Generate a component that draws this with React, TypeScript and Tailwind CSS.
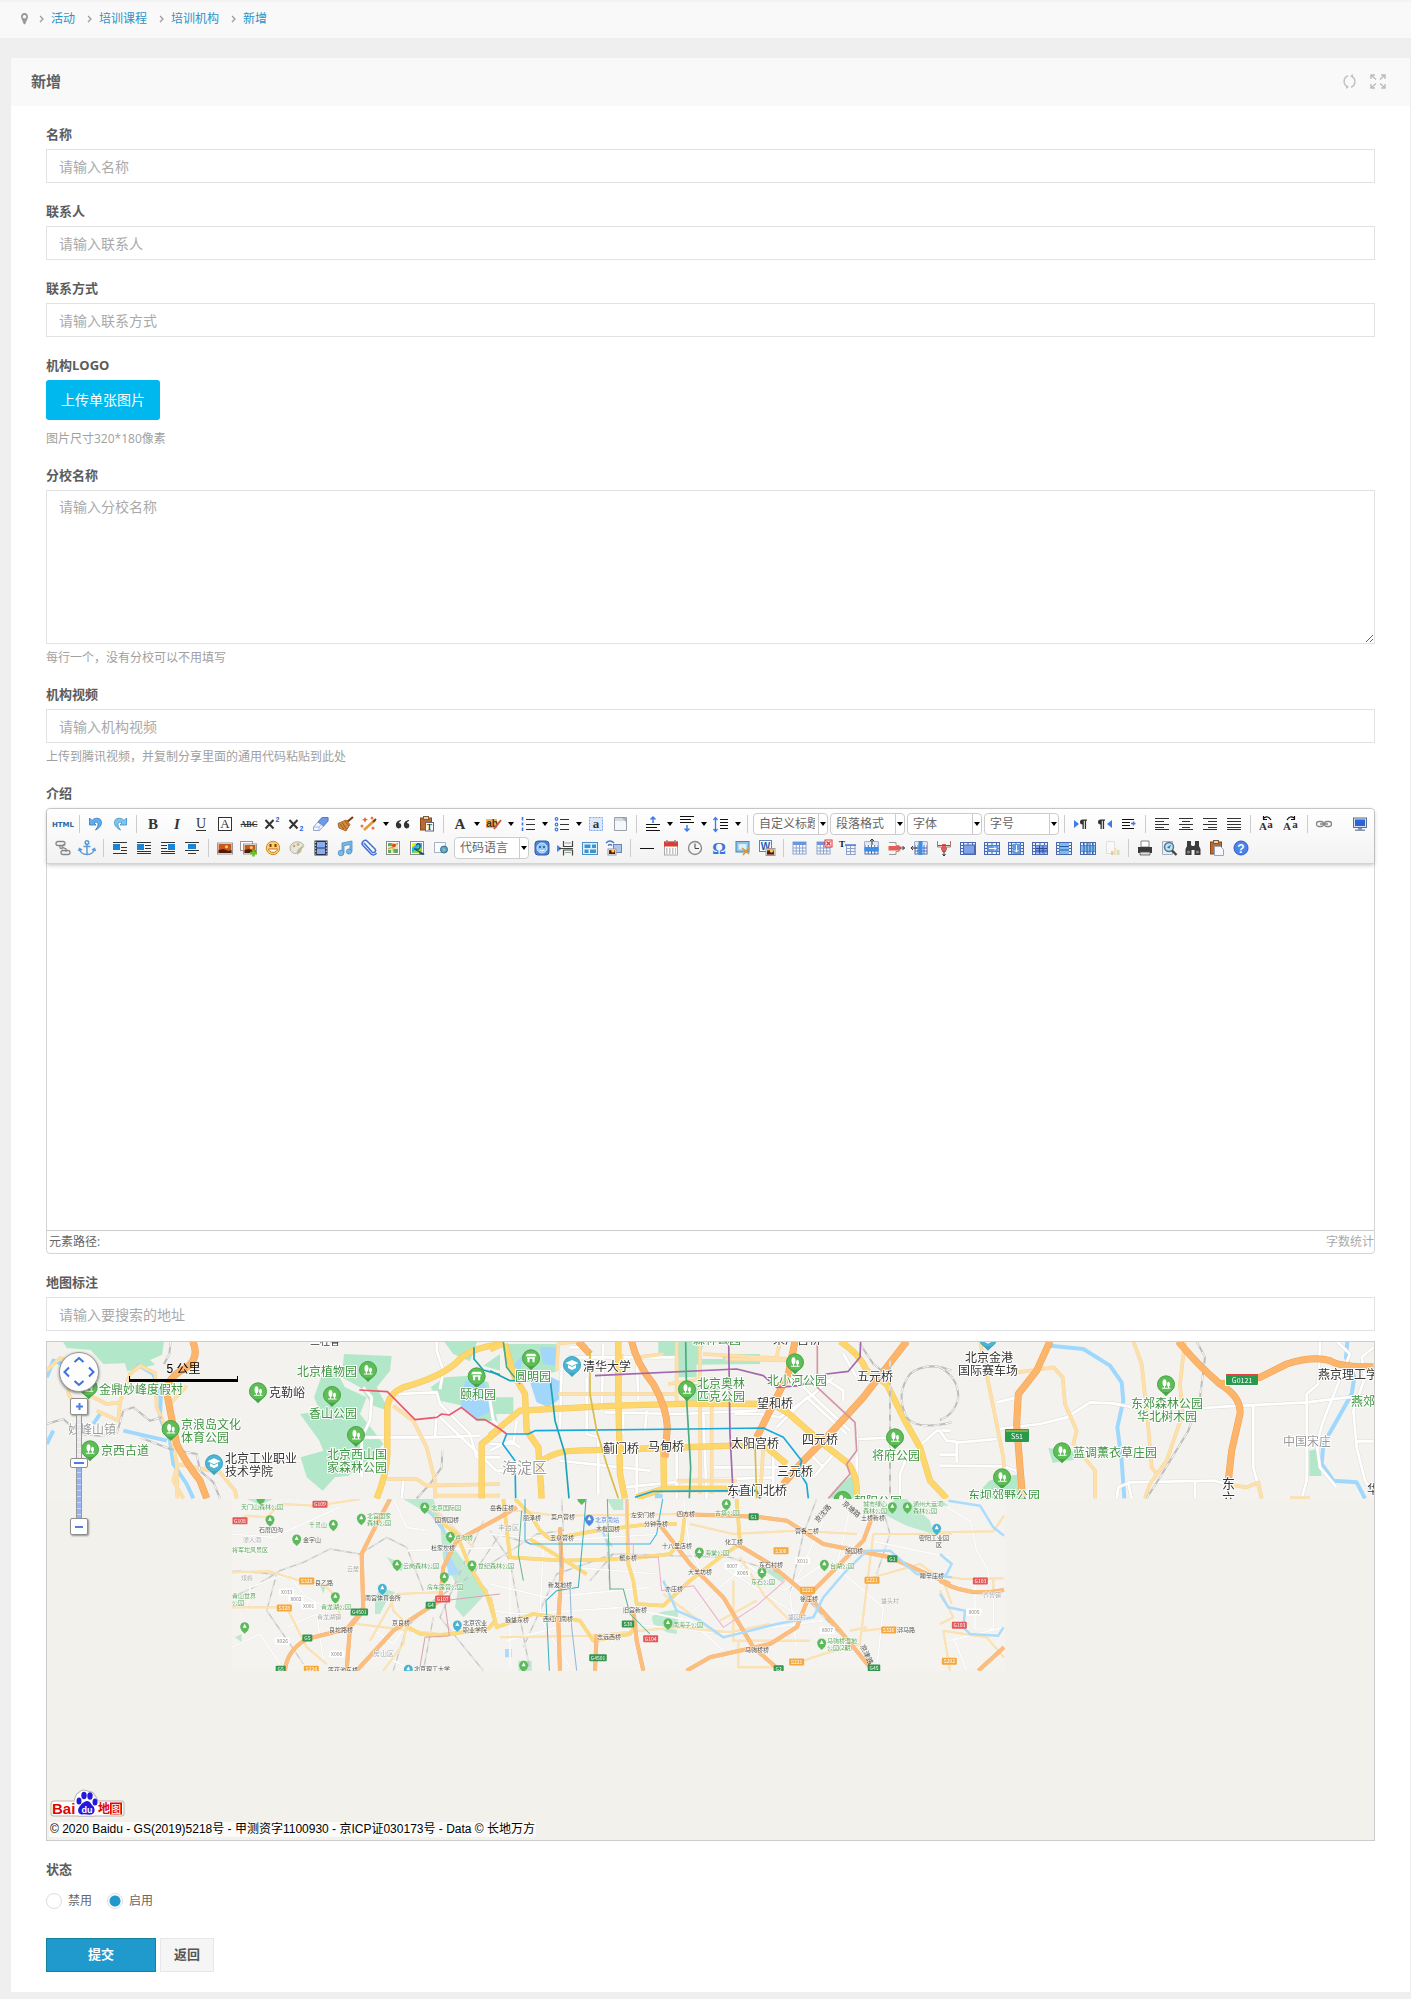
import React from "react";

const FONT = "font-['Open_Sans','Noto_Sans_CJK_SC',sans-serif]";

/* ---------- toolbar icons (20 x 20 grid) ---------- */

const INK = "#333";

function Lines({ rows, color = INK }: { rows: number[][]; color?: string }) {
  return (
    <g stroke={color} strokeWidth="1">
      {rows.map(([y, a, b], i) => (
        <path key={i} d={`M${a} ${y + 0.5}H${b}`} />
      ))}
    </g>
  );
}

function Glyph({ t, x = 10, y = 15, s = 14, w = 700, c = INK, f = "Liberation Serif", i = false }: { t: string; x?: number; y?: number; s?: number; w?: number; c?: string; f?: string; i?: boolean }) {
  return (
    <text x={x} y={y} fontSize={s} fontWeight={w} fill={c} fontFamily={f} textAnchor="middle" fontStyle={i ? "italic" : "normal"}>
      {t}
    </text>
  );
}

function Grid({ x = 3, y = 4, w = 13, h = 12, head = "#6b95e0", fill = "#fff", line = "#8aa2cc" }: { x?: number; y?: number; w?: number; h?: number; head?: string; fill?: string; line?: string }) {
  return (
    <g>
      <rect x={x} y={y} width={w} height={h} fill={fill} stroke={line} />
      <rect x={x} y={y} width={w} height="3" fill={head} />
      <path d={`M${x} ${y + 6}h${w}M${x} ${y + 9}h${w}M${x + w / 4} ${y + 3}v${h - 3}M${x + w / 2} ${y + 3}v${h - 3}M${x + (w * 3) / 4} ${y + 3}v${h - 3}`} stroke={line} strokeWidth="1" />
    </g>
  );
}

function MergeGrid({ children }: { children?: React.ReactNode }) {
  return (
    <g>
      <rect x="2.5" y="4.5" width="15" height="12" fill="#e8f0fb" stroke="#4a68ab" />
      <path d="M2.5 7.5h15M2.5 10.5h15M2.5 13.5h15M5.5 4.5v12M14.5 4.5v12M10 4.5v12" stroke="#4a68ab" />
      {children}
    </g>
  );
}

function Pic({ x, y, w, h }: { x: number; y: number; w: number; h: number }) {
  return (
    <g>
      <rect x={x} y={y} width={w} height={h} fill="#fff" stroke="#999" />
      <rect x={x + 1} y={y + 1} width={w - 2} height={h - 2} fill="#c9581c" />
      <path d={`M${x + 1} ${y + h - 1}v-3l${w / 3} -1 ${w / 3} 2 ${w / 3 - 2} -1v3z`} fill="#4c1c0c" />
      <circle cx={x + w * 0.6} cy={y + h * 0.35} r="1.5" fill="#ffd14f" />
    </g>
  );
}

const ARROW_BLUE = "#3f7be8";

const ICONS: Record<string, React.ReactNode> = {
  "源代码": <Glyph t="HTML" s={7} y={13} c="#2d6a9f" f="DejaVu Sans" />,
  "撤销": <path d="M3.500 4v7H10L8 9C10.500 7.500 12.500 8.500 12 11c-.3 2-1.500 3.500-2.500 5 3-1.500 6-4 6-7.500C15.500 3.500 9 3 6 6.500z" fill="#63aee8" stroke="#2e79bf" strokeWidth=".8" />,
  "重做": <path d="M16.500 4v7H10l2-2C9.500 7.500 7.500 8.500 8 11c.3 2 1.500 3.500 2.500 5-3-1.500-6-4-6-7.500C4.500 3.500 11 3 14 6.500z" fill="#7fc4ea" stroke="#3c8fc4" strokeWidth=".8" />,
  "加粗": <Glyph t="B" s={15} />,
  "斜体": <Glyph t="I" s={15} i />,
  "下划线": (
    <g>
      <Glyph t="U" s={14} w={400} y={14} />
      <path d="M5 16.500h10" stroke={INK} />
    </g>
  ),
  "字符边框": (
    <g>
      <rect x="3.500" y="3.500" width="13" height="13" fill="#fff" stroke={INK} />
      <Glyph t="A" s={13} w={400} y={14} />
    </g>
  ),
  "删除线": (
    <g>
      <Glyph t="ABC" s={8} y={13} />
      <path d="M1.500 10.500h17" stroke={INK} />
    </g>
  ),
  "上标": (
    <g>
      <path d="M2.500 6l8 8.500M10.500 6l-8 8.500" stroke={INK} strokeWidth="2" />
      <Glyph t="2" x={14.5} y={8} s={7} c="#2a5be0" f="Liberation Sans" />
    </g>
  ),
  "下标": (
    <g>
      <path d="M2.500 6l8 8.500M10.500 6l-8 8.500" stroke={INK} strokeWidth="2" />
      <Glyph t="2" x={14.5} y={17} s={7} c="#2a5be0" f="Liberation Sans" />
    </g>
  ),
  "清除格式": (
    <g strokeWidth=".8">
      <path d="M2.500 13L11 3.500h6L17 7 8.500 16.500H2.500z" fill="#f2f5fd" stroke="#7c8fc4" />
      <path d="M11 3.500h6L17 7l-4.500 5L7 8z" fill="#6e98e8" stroke="#4d74c4" />
      <path d="M2.500 13H8v3.500M8 13l3.500-3.500" stroke="#9aa8cc" fill="none" />
    </g>
  ),
  "格式刷": (
    <g>
      <path d="M18 3l-6 5" stroke="#7b3f14" strokeWidth="2.200" />
      <path d="M3 9.500l8-3.500 4 4.500L11 17 4 14z" fill="#d68a3c" stroke="#96561c" strokeWidth=".8" />
      <path d="M5 10l4 5M7.500 9l4 6M10 7l4 5" stroke="#7a4010" strokeWidth=".7" />
    </g>
  ),
  "自动排版": (
    <g>
      <path d="M5 16L16 6" stroke="#dc9c3c" strokeWidth="2.500" />
      <path d="M14 8l3-3" stroke="#704010" strokeWidth="2" />
      <path d="M6 3l1 2 2 .5-2 1-1 2-1-2-2-.5 2-1zM13 2l.7 1.500 1.500.5-1.500.7-.7 1.500-.7-1.500-1.500-.7 1.500-.5zM3 10l.7 1.500 1.500.5-1.500.7-.7 1.500-.7-1.500L.8 12l1.500-.5zM14 12l.7 1.500 1.500.5-1.500.7-.7 1.500-.7-1.500-1.500-.7 1.500-.5z" fill="#ee5a28" />
    </g>
  ),
  "引用": <path d="M8 6C4 6.500 2.500 9 3 12a2.700 2.700 0 1 0 3-3c0-1 1-1.800 2-2zM16 6c-4 .5-5.500 3-5 6a2.700 2.700 0 1 0 3-3c0-1 1-1.800 2-2z" fill={INK} />,
  "纯文本粘贴": (
    <g>
      <rect x="3.500" y="4" width="11" height="12" fill="#b86a34" stroke="#8a4518" />
      <rect x="6.500" y="2.500" width="5" height="3" fill="#e7d2b4" stroke="#7a5a3a" />
      <rect x="8.500" y="8.500" width="8" height="8.500" fill="#fff" stroke="#667" />
      <Glyph t="T" x={12.5} y={16} s={8} />
    </g>
  ),
  "字体颜色": <Glyph t="A" s={15} />,
  "背景色": (
    <g>
      <rect x="2" y="5" width="11" height="9" fill="#f8b64c" />
      <Glyph t="ab" x={8} y={13} s={10} f="Liberation Sans" />
      <path d="M10 15l7-9" stroke="#cf5a3c" strokeWidth="2" />
    </g>
  ),
  "有序列表": (
    <g>
      <path d="M4.500 3v3.500M4.500 8.500v3M4.500 13.500v3.500" stroke={ARROW_BLUE} strokeWidth="1.600" />
      <Lines rows={[[5, 8, 17], [10, 8, 17], [15, 8, 17]]} />
    </g>
  ),
  "无序列表": (
    <g>
      <g fill="none" stroke={ARROW_BLUE} strokeWidth="1.200">
        <circle cx="4.500" cy="5" r="1.300" />
        <circle cx="4.500" cy="10.500" r="1.300" />
        <circle cx="4.500" cy="15.500" r="1.300" />
      </g>
      <Lines rows={[[5, 8, 17], [10, 8, 17], [15, 8, 17]]} />
    </g>
  ),
  "全选": (
    <g>
      <rect x="3.500" y="3.500" width="13" height="13" fill="#dce9fc" stroke="#7fa8ea" strokeDasharray="2 1" />
      <Glyph t="a" y={14} s={13} />
    </g>
  ),
  "清空文档": (
    <g>
      <path d="M4.500 3.500h12v13h-12z" fill="#f6f7f9" stroke="#9aa0aa" />
      <path d="M5 4h11v3H5z" fill="#d4d9e2" />
      <path d="M12 4l4 4V4z" fill="#aab2c0" />
    </g>
  ),
  "段前距": (
    <g>
      <path d="M10 9V3M7.500 5.500L10 3l2.500 2.500" stroke={ARROW_BLUE} strokeWidth="1.500" fill="none" />
      <Lines rows={[[10, 3, 17], [13, 3, 14], [16, 3, 17]]} color="#111" />
    </g>
  ),
  "段后距": (
    <g>
      <path d="M10 11v6M7.500 14.500L10 17l2.500-2.500" stroke={ARROW_BLUE} strokeWidth="1.500" fill="none" />
      <Lines rows={[[2, 3, 17], [5, 3, 14], [8, 3, 17]]} color="#111" />
    </g>
  ),
  "行间距": (
    <g>
      <path d="M4.500 4v13M2.500 6L4.500 3.500 6.500 6M2.500 15l2 2.500 2-2.500" stroke={ARROW_BLUE} strokeWidth="1.300" fill="none" />
      <Lines rows={[[5, 9, 17], [8, 9, 17], [11, 9, 17], [14, 9, 17]]} color="#111" />
    </g>
  ),
  "从左向右": (
    <g>
      <path d="M3 6l5 4-5 4z" fill={ARROW_BLUE} />
      <path d="M16 5.500h-4.500a2.500 2.500 0 0 0 0 5V15h1.300V6.800h1V15h1.300V6.800H16z" fill={INK} />
    </g>
  ),
  "从右向左": (
    <g>
      <path d="M17 6l-5 4 5 4z" fill={ARROW_BLUE} />
      <path d="M10 5.500H5.500a2.500 2.500 0 0 0 0 5V15h1.300V6.800h1V15h1.300V6.800H10z" fill={INK} />
    </g>
  ),
  "首行缩进": (
    <g>
      <Lines rows={[[5, 3, 15], [8, 3, 11], [11, 3, 11], [14, 3, 15]]} color="#111" />
      <path d="M12 9.500h4.500M14.500 7.500v4" stroke={ARROW_BLUE} strokeWidth="1.500" />
    </g>
  ),
  "居左对齐": <Lines rows={[[4, 3, 17], [7, 3, 12], [10, 3, 17], [13, 3, 12], [15, 3, 17]]} />,
  "居中对齐": <Lines rows={[[4, 3, 17], [7, 6, 14], [10, 3, 17], [13, 6, 14], [15, 3, 17]]} />,
  "居右对齐": <Lines rows={[[4, 3, 17], [7, 8, 17], [10, 3, 17], [13, 8, 17], [15, 3, 17]]} />,
  "两端对齐": <Lines rows={[[4, 3, 17], [7, 3, 17], [10, 3, 17], [13, 3, 17], [15, 3, 17]]} />,
  "字母大写": (
    <g>
      <Glyph t="A" x={6} y={16} s={11} />
      <Glyph t="a" x={13} y={14} s={11} />
      <path d="M14 6Q11 1 7 4M6.500 2v3.500H10" fill="none" stroke="#111" strokeWidth="1.200" />
    </g>
  ),
  "字母小写": (
    <g>
      <Glyph t="A" x={6} y={16} s={11} />
      <Glyph t="a" x={14} y={14} s={11} />
      <path d="M6 6Q9 1 13 4M13.500 2v3.500H10" fill="none" stroke="#111" strokeWidth="1.200" />
    </g>
  ),
  "超链接": (
    <g fill="none" stroke="#888" strokeWidth="1.300">
      <rect x="2.500" y="7.500" width="7" height="5" rx="2.500" />
      <rect x="10.500" y="7.500" width="7" height="5" rx="2.500" />
      <path d="M6 10h8" />
    </g>
  ),
  "全屏": (
    <g>
      <rect x="3.500" y="4" width="13" height="9.500" fill="#d9e2f2" stroke="#5a6f96" />
      <rect x="5" y="5.500" width="10" height="6.500" fill="#2b63d8" />
      <path d="M8 14h4v1.500h3v1.500H5v-1.500h3z" fill="#8494b2" />
    </g>
  ),
  "取消链接": (
    <g fill="none" stroke="#888" strokeWidth="1.300">
      <rect x="3" y="3.500" width="9" height="4" rx="2" />
      <rect x="8" y="12.500" width="9" height="4" rx="2" />
      <path d="M7 7v3l3 1M11 6l-2 3 4 2v3" />
    </g>
  ),
  "锚点": (
    <g fill="none" stroke="#5b9bd8" strokeWidth="1.500">
      <circle cx="10" cy="4.500" r="1.800" />
      <path d="M10 6.500V16M6.500 8.500h7M2.500 10.500C3 14.500 6 16.500 10 16.500s7-2 7.500-6M1.500 13l1-2.500 2.500 1.500M18.500 13l-1-2.500-2.500 1.500" />
    </g>
  ),
  "默认浮动": (
    <g>
      <rect x="3" y="6" width="7" height="6" fill="#1985d8" />
      <Lines rows={[[4, 3, 17], [9, 11, 17], [12, 11, 17], [15, 3, 17]]} />
    </g>
  ),
  "左浮动": (
    <g>
      <rect x="3" y="6" width="7" height="6" fill="#1985d8" />
      <Lines rows={[[4, 3, 17], [7, 11, 17], [10, 11, 17], [13, 3, 17], [15, 3, 17]]} />
    </g>
  ),
  "右浮动": (
    <g>
      <rect x="10" y="6" width="7" height="6" fill="#1985d8" />
      <Lines rows={[[4, 3, 17], [7, 3, 9], [10, 3, 9], [13, 3, 17], [15, 3, 17]]} />
    </g>
  ),
  "居中浮动": (
    <g>
      <rect x="6" y="6" width="8" height="5" fill="#1985d8" />
      <Lines rows={[[4, 3, 17], [12, 3, 17], [15, 6, 14]]} />
    </g>
  ),
  "单图上传": <Pic x={2.5} y={5} w={15} h={11} />,
  "多图上传": (
    <g>
      <rect x="1.500" y="3.500" width="12" height="9" fill="#fff" stroke="#999" />
      <Pic x={4.5} y={6} w={13} h={10} />
      <path d="M14.500 11.500v7M11 15h7" stroke="#6cc12c" strokeWidth="2.600" />
    </g>
  ),
  "表情": (
    <g>
      <circle cx="10" cy="10" r="6.700" fill="#fdd06a" stroke="#d8862c" />
      <rect x="6.500" y="6" width="2" height="3" fill="#7a3e10" />
      <rect x="11.500" y="6" width="2" height="3" fill="#7a3e10" />
      <path d="M5.500 11h9c-1 4.500-8 4.500-9 0z" fill="#fff" stroke="#a8581c" strokeWidth=".8" />
    </g>
  ),
  "涂鸦": (
    <g>
      <path d="M3 10c0-4 5-7 9-6 5 1 6 5 3 6-2 .5-3 0-3.500 2s-2 4-4 3.500S3 13 3 10z" fill="#e8e6dc" stroke="#b4b0a0" />
      <circle cx="7" cy="8" r="1.300" fill="#e49a6c" />
      <circle cx="11" cy="6.500" r="1.300" fill="#9ac46c" />
      <path d="M10 13l6-6-2 7-4 3z" fill="#b9c08a" />
    </g>
  ),
  "视频": (
    <g>
      <rect x="3.500" y="2.500" width="13" height="15" fill="#2d3244" />
      <rect x="6" y="4" width="8" height="5.500" fill="#86aef0" />
      <rect x="6" y="10.500" width="8" height="5.500" fill="#86aef0" />
      <path d="M4.700 3.500v13M15.300 3.500v13" stroke="#dde" strokeDasharray="1.500 1.500" />
    </g>
  ),
  "音乐": (
    <g fill="#7ab8e4" stroke="#4c8ec4" strokeWidth=".8">
      <path d="M7 5l10-2v10.500h-2V6.500l-6 1.200V15H7z" />
      <circle cx="6" cy="15" r="2.800" />
      <circle cx="14" cy="13.500" r="2.600" />
    </g>
  ),
  "附件": <path d="M5 5l8 9a2 2 0 0 0 3-3L8.500 3.500a3 3 0 0 0-4.500 4L12 16a3.500 3.500 0 0 0 5.500-1" fill="none" stroke="#3f6fd8" strokeWidth="1.500" />,
  "Baidu地图": (
    <g>
      <rect x="3.500" y="3.500" width="13" height="13" fill="#fff" stroke="#8a8a8a" />
      <rect x="5" y="5" width="10" height="10" fill="#d8e8c0" />
      <path d="M5 5h4v3H5zM11 11h4v4h-4zM5 12h3v3H5z" fill="#5cae5a" />
      <path d="M5 11l5-2 5-4M9 5l2 10" stroke="#e0a23c" strokeWidth="1.200" />
      <circle cx="11" cy="7.500" r="1.800" fill="#e0432c" />
    </g>
  ),
  "Google地图": (
    <g>
      <rect x="3.500" y="3.500" width="13" height="13" fill="#fff" stroke="#8a8a8a" />
      <rect x="5" y="5" width="10" height="10" fill="#20b8ec" />
      <path d="M5 5h6l-6 5z" fill="#f8e420" />
      <path d="M5 15l7-7 3 3v4z" fill="#8ade28" />
      <path d="M9 7q4-3 4 1t-4 3 4 3-1 1" stroke="#174a94" fill="none" strokeWidth="1.200" />
    </g>
  ),
  "插入Iframe": (
    <g>
      <path d="M3.500 4.500h11v10h-11z" fill="#fbfcfe" stroke="#a8b2bf" />
      <circle cx="13" cy="11.500" r="3.500" fill="#5c9fd8" stroke="#346c9c" />
      <path d="M11.500 9.500l3 2-2 3z" fill="#8ed05a" />
    </g>
  ),
  "百度应用": (
    <g>
      <rect x="3" y="3" width="14" height="14" rx="3" fill="#4c84d8" stroke="#2f5ca8" />
      <circle cx="10" cy="10" r="5" fill="#8fc4f4" stroke="#d4ebfd" />
      <circle cx="8" cy="9" r="1" fill="#1d4c9c" />
      <circle cx="12" cy="9" r="1" fill="#1d4c9c" />
      <path d="M7.500 12q2.500 2 5 0" stroke="#fff" fill="none" />
    </g>
  ),
  "分页": (
    <g>
      <path d="M1 7l5 3.500L1 14z" fill="#4b88e0" />
      <path d="M7.500 3v5.500h9V3M7.500 17.500V12h9v5.500M3 10.500h14" fill="none" stroke="#444" strokeWidth="1.200" />
      <path d="M9 5h6M9 14.500h6" stroke="#8a8" />
    </g>
  ),
  "模板": (
    <g>
      <rect x="2.500" y="4.500" width="15" height="12" fill="#e2f0fc" stroke="#4c8ec8" />
      <path d="M4.500 6.500h6v3.500h-6zM12 6.500h4v3.500h-4zM4.500 11.500h4v3.500h-4zM10 11.500h6v3.500h-6z" fill="#3a94d4" />
    </g>
  ),
  "远程图片": (
    <g>
      <path d="M2 5q4-4 8 0M4 7.500q2-2 4 0" fill="none" stroke="#4a78c8" strokeWidth="1.300" />
      <rect x="9.500" y="6.500" width="8" height="8" fill="#aac6ec" stroke="#6a86b4" />
      <Pic x={4} y={11} w={8} h={6} />
    </g>
  ),
  "分隔线": <path d="M3 10.500h14" stroke="#111" strokeWidth="1.200" />,
  "日期": (
    <g>
      <rect x="3.500" y="4" width="13" height="13" fill="#fff" stroke="#aaa" />
      <rect x="3" y="3.500" width="14" height="5" fill="#dc3c34" />
      <path d="M6 2v3M14 2v3" stroke="#888" strokeWidth="1.500" />
      <path d="M5 11h10M5 13h10M5 15h10" stroke="#888" strokeDasharray="1.500 1.500" />
    </g>
  ),
  "时间": (
    <g>
      <circle cx="10" cy="10" r="6.500" fill="#f4f4f4" stroke="#8c8c8c" strokeWidth="1.400" />
      <path d="M10 5.500V10.500h4" stroke="#444" fill="none" />
    </g>
  ),
  "特殊字符": <Glyph t="Ω" s={17} y={16} c="#3a72e0" />,
  "截图": (
    <g>
      <rect x="3" y="3.500" width="13" height="10.500" fill="#8cc4e6" stroke="#4c84b4" />
      <rect x="5.500" y="6" width="8" height="5.500" fill="#dff0fa" />
      <path d="M9 10l7 6M16 10l-6 7" stroke="#d89a34" strokeWidth="1.600" />
    </g>
  ),
  "图片转存": (
    <g>
      <rect x="2.500" y="2.500" width="12" height="11" fill="#fff" stroke="#5a82c4" />
      <Glyph t="W" x={8.500} y={11.500} s={10} c="#2a5cae" f="Liberation Sans" />
      <Pic x={9} y={10.500} w={9} h={7} />
    </g>
  ),
  "插入表格": <Grid />,
  "删除表格": (
    <g>
      <Grid />
      <rect x="11" y="2" width="7" height="7" fill="#fff" stroke="#dc3030" />
      <path d="M12.500 3.500l4 4M16.500 3.500l-4 4" stroke="#dc3030" strokeWidth="1.300" />
    </g>
  ),
  "表格前插入行": (
    <g>
      <path d="M7 7.500h11M8.500 7v10M8.500 10.500h9M8.500 13.500h9M8.500 16.500h9M12.500 8v9M17 8v9" stroke="#8aa2cc" />
      <path d="M7 7h11" stroke="#4c80d8" strokeWidth="1.500" />
      <Glyph t="T" x={4} y={9} s={9} c="#111" />
    </g>
  ),
  "前插入行": (
    <g>
      <Grid head="#dfe8f6" line="#4a68ab" />
      <rect x="2.500" y="9" width="14" height="4" fill="#3c8ee8" />
      <path d="M10 7V1M8 3l2-2 2 2" stroke="#333" fill="none" />
    </g>
  ),
  "删除行": (
    <g>
      <path d="M3 4.500h7v3h3v6h-3v3H3" fill="none" stroke="#999" />
      <rect x="2.500" y="8" width="12" height="4.500" fill="#e45c54" />
      <path d="M14 10h4.500M16.500 8l2 2-2 2" stroke="#333" fill="none" />
    </g>
  ),
  "前插入列": (
    <g>
      <Grid x={5} w={12} head="#dfe8f6" line="#4a68ab" />
      <rect x="8.500" y="3" width="4" height="14" fill="#3c8ee8" />
      <path d="M7 10H1M3 8l-2 2 2 2" stroke="#333" fill="none" />
    </g>
  ),
  "删除列": (
    <g>
      <path d="M3.500 3v6h4v3h5V9h4V3" fill="none" stroke="#a77" />
      <rect x="8" y="6" width="4" height="8" fill="#e45c54" />
      <path d="M4 7.500h12" stroke="#c03c34" strokeWidth="1.200" />
      <path d="M10 13v5M8.500 16l1.500 2 1.500-2" stroke="#333" fill="none" />
    </g>
  ),
  "合并多个单元格": (
    <MergeGrid>
      <rect x="5.500" y="7" width="11" height="9" fill="#7ea0ea" stroke="#4a68ab" />
    </MergeGrid>
  ),
  "右合并单元格": (
    <MergeGrid>
      <rect x="5.500" y="7.500" width="11" height="6" fill="#5c9be8" />
      <path d="M7 10.500h7M12 8.500l2 2-2 2" stroke="#fff" fill="none" />
    </MergeGrid>
  ),
  "下合并单元格": (
    <MergeGrid>
      <rect x="6.500" y="6" width="8" height="10" fill="#5c9be8" />
      <path d="M10.500 7v7M8.500 12l2 2 2-2" stroke="#fff" fill="none" />
    </MergeGrid>
  ),
  "拆分单元格": (
    <MergeGrid>
      <path d="M6 7.500h11v8H6z" fill="#7ea0ea" />
      <path d="M6 10.500h11M6 13h11M9.500 7.500v8M13 7.500v8" stroke="#2e4a94" />
    </MergeGrid>
  ),
  "拆分成行": (
    <MergeGrid>
      <path d="M5.500 5h9.500v11H5.500z" fill="#7cbcf2" />
      <path d="M5.500 8.500h9.500M5.500 12h9.500" stroke="#265a9c" />
    </MergeGrid>
  ),
  "拆分成列": (
    <MergeGrid>
      <path d="M3 7.500h14v6H3z" fill="#7cbcf2" />
      <path d="M6 5v11M9 5v11M12 5v11M15 5v11" stroke="#265a9c" />
    </MergeGrid>
  ),
  "图表": (
    <g opacity=".35">
      <path d="M4.500 3.500h8v12h-8z" fill="#fff" stroke="#bbb" />
      <path d="M9 13h2.500v4H9z" fill="#e06a4c" />
      <path d="M12 10h2.500v7H12z" fill="#eec04c" />
      <path d="M15 12h2.500v5H15z" fill="#8ac05c" />
    </g>
  ),
  "打印": (
    <g>
      <path d="M6 3h8v6H6z" fill="#fff" stroke="#888" />
      <path d="M3 9h14v6H3z" fill="#3a3a3a" />
      <path d="M5 14h10v3H5z" fill="#ddd" stroke="#555" strokeWidth=".8" />
    </g>
  ),
  "预览": (
    <g>
      <path d="M3.500 3.500h10v13h-10z" fill="#e8eef6" stroke="#a4b0c0" />
      <circle cx="10" cy="9" r="4.500" fill="#b9e4f4" stroke="#5c7484" strokeWidth="1.500" />
      <path d="M13 12.500l4.500 4.500" stroke="#444" strokeWidth="2.400" />
      <path d="M8 9.500l4-3-1.500 4z" fill="#2c7ab0" />
    </g>
  ),
  "查询替换": (
    <g fill="#3c3c3c">
      <path d="M4 3h4v4l1 1h2l1-1V3h4v5l1.500 3v6h-6v-5h-3v5h-6v-6L4 8z" />
      <circle cx="5.500" cy="14" r="1.500" fill="#888" />
      <circle cx="14.500" cy="14" r="1.500" fill="#888" />
    </g>
  ),
  "粘贴": (
    <g>
      <rect x="3.500" y="4" width="11" height="12" fill="#b86a34" stroke="#8a4518" />
      <rect x="6.500" y="2.500" width="5" height="3" fill="#e7d2b4" stroke="#7a5a3a" />
      <path d="M7.500 8.500h6l3 3v6h-9z" fill="#f6f8fc" stroke="#9aa4b8" />
    </g>
  ),
  "帮助": (
    <g>
      <circle cx="10" cy="10" r="7" fill="#4c84ec" stroke="#2c5cc4" />
      <Glyph t="?" y={14.5} s={12} c="#fff" f="Liberation Sans" />
    </g>
  ),
};

const ROW1 = "源代码|撤销 重做|加粗 斜体 下划线 字符边框 删除线 上标 下标 清除格式 格式刷 自动排版+ 引用 纯文本粘贴|字体颜色+ 背景色+ 有序列表+ 无序列表+ 全选 清空文档|段前距+ 段后距+ 行间距+|@自定义标题 @段落格式 @字体 @字号|从左向右 从右向左 首行缩进|居左对齐 居中对齐 居右对齐 两端对齐|字母大写 字母小写|超链接";
const ROW2 = "取消链接 锚点|默认浮动 左浮动 右浮动 居中浮动|单图上传 多图上传 表情 涂鸦 视频 音乐 附件 Baidu地图 Google地图 插入Iframe @代码语言 百度应用 分页 模板 远程图片|分隔线 日期 时间 特殊字符 截图 图片转存|插入表格 删除表格 表格前插入行 前插入行 删除行 前插入列 删除列 合并多个单元格 右合并单元格 下合并单元格 拆分单元格 拆分成行 拆分成列 图表|打印 预览 查询替换 粘贴 帮助";

function Caret() {
  return <span className="block h-0 w-0 border-x-[3px] border-t-[4px] border-x-transparent border-t-black" />;
}

function Tool({ id }: { id: string }) {
  if (id[0] === "@") {
    const name = id.slice(1);
    return (
      <span className="relative mx-px flex h-[22px] w-[75px] shrink-0 overflow-hidden rounded-sm border border-[#ccc] bg-white">
        <select aria-label={name} className="h-full w-[61px] appearance-none overflow-hidden pl-[5px] text-xs leading-5 text-[#666] outline-none">
          <option>{name}</option>
        </select>
        <span className="pointer-events-none ml-auto flex w-[9px] items-center justify-center border-l border-[#ccc]">
          <Caret />
        </span>
      </span>
    );
  }
  const menu = id.endsWith("+");
  const name = menu ? id.slice(0, -1) : id;
  return (
    <button type="button" title={name} aria-label={name} className="flex h-6 shrink-0 items-center">
      <svg width="24" height="20" viewBox="-2 0 24 20" fill="none">
        {ICONS[name]}
      </svg>
      {menu && (
        <span className="flex w-[10px] justify-center">
          <Caret />
        </span>
      )}
    </button>
  );
}

function ToolRow({ spec }: { spec: string }) {
  return (
    <div className="flex h-6 items-center">
      {spec.split("|").map((group, i) => (
        <React.Fragment key={i}>
          {i > 0 && <span className="mx-1 h-[18px] w-px shrink-0 bg-[#ccc]" />}
          {group.split(" ").map((id) => (
            <Tool key={id} id={id} />
          ))}
        </React.Fragment>
      ))}
    </div>
  );
}

/* ---------- map ---------- */

/* Sheets are surveyed at three units per pixel; each has its own origin on the canvas. */
const SHEETS: Record<string, [number, number]> = { a: [-7, -8], b: [443, -8], c: [893, -8] };

type Style = "hw" | "major" | "minor" | "white" | "rail" | "water" | "park" | "lake" | "red" | "teal" | "cyan" | "purple" | "green" | "gold" | "rose" | "river" | "pink" | "blue";
const STROKES: Record<string, [string, number]> = {
  hw: ["#fdb56b", 18],
  major: ["#fdd76b", 16],
  minor: ["#fde0ab", 8],
  white: ["#ffffff", 8],
  rail: ["#a9a9a9", 5],
  river: ["#9fd8fd", 12],
  red: ["#e9596f", 5],
  teal: ["#1ba3b5", 5],
  cyan: ["#17a9dc", 5],
  purple: ["#a267ad", 5],
  green: ["#4cab80", 5],
  gold: ["#d8bc45", 5],
  rose: ["#d695a3", 5],
  pink: ["#eda5cc", 5],
  blue: ["#83add8", 5],
};

const TOP: [string, Style, string][] = [
  ["a", "park", "M68 22H372L366 62L330 78L345 92L262 112L255 88L190 90L152 48L80 42Z"],
  ["a", "park", "M845 125L892 118L915 160L980 190L960 240L1000 290L1030 330L980 380L925 425L885 430L848 470L800 430L782 370L850 350L838 320L780 240L840 232L822 190Z"],
  ["a", "park", "M912 60L1055 66L1050 110L1010 160L1048 232L1000 215L960 160L905 130Z"],
  ["a", "park", "M1172 160L1215 130L1290 125L1345 145L1372 260L1310 262L1270 215L1200 200Z"],
  ["a", "park", "M1212 22H1312L1290 82L1240 60ZM1330 95L1380 60V110Z"],
  ["a", "lake", "M1275 140H1330L1352 190L1350 235L1305 255L1262 215Z"],
  ["b", "park", "M48 30H200L205 110L140 130L60 110ZM505 22H645L625 75H700L690 60H810V90L620 92V130H565V75L505 75ZM585 150H690V205H585ZM5 190H70V240H20L10 270Z"],
  ["b", "lake", "M120 145L185 130L215 145V190L175 220L140 205ZM70 95L100 60L90 110ZM150 40H200L195 95L160 90ZM495 480H518V493H495Z"],
  ["b", "park", "M1040 460L1085 425L1110 493H1020Z"],
  ["c", "park", "M325 342L415 355L400 378L338 386ZM120 470L148 440L205 425L232 422L240 493H118ZM1108 350L1130 345L1145 426H1108Z"],
  ["a", "river", "M20 130L40 80L70 90M290 90L340 120L362 190L360 250L390 320L400 390L440 450L460 493M180 240L160 270M250 290L380 320M20 330L40 290"],
  ["a", "minor", "M20 110L60 72L90 80L85 180L110 220M140 180L200 210L240 205L270 120L300 95L350 120M240 205L235 260L170 230M345 120L350 220L400 330L410 390L412 493M410 390L540 415L585 470L590 493M410 400L400 440L430 493M385 215L440 155"],
  ["a", "rail", "M392 22L388 60L372 90M20 270L70 255L120 300L180 305L210 300M230 300L250 230L280 220L330 260L365 250M1207 350L1205 400L1170 450L1130 493M300 310L390 345L470 360L480 410L520 445L540 493"],
  ["a", "white", "M970 160L995 190L990 260L965 310V430M965 310H1180L1320 305M1070 180L1190 175L1200 210L1240 250L1290 300L1310 370M1200 165L1210 110L1190 50V22M1090 440L1085 493M1185 310L1190 240L1380 420M1310 370H1380"],
  ["a", "minor", "M1060 215L1120 260L1160 340L1185 440V493M1040 435H1130L1160 455L1380 450M1180 485H1380"],
  ["a", "hw", "M458 22Q480 70 440 100Q380 130 380 175L410 330Q440 390 480 440L500 493"],
  ["a", "major", "M1010 493Q1040 420 1042 360V220Q1045 180 1090 160Q1200 130 1250 85Q1290 40 1380 32M1325 493V330L1380 285"],
  ["b", "white", "M0 330H70L80 260M215 100L210 290M290 130V300L325 310V480M240 40H300M230 70H560M340 30L335 230M440 60L445 200M345 235L570 240L800 230M470 230L465 290M0 350L60 320L90 340M20 410H150L160 470M210 380L480 410M400 240V300M400 460L600 440L850 430M670 400H870M850 340V493M640 240L650 493M735 240H810L870 250L970 180L1030 130M860 280L950 190L1070 300M930 150L1080 290M1000 130L1060 170L1060 200M1100 300V493M1105 315L1230 310M1230 493V420L1250 370L1340 290H1380M910 430L960 360L1000 400M970 430L1040 350M0 200L10 260L40 290M1060 60L1100 130M440 330V493M560 330V493"],
  ["b", "minor", "M200 110L205 30L260 22M205 180L560 180M560 22V200M440 70L520 60M535 150L640 135M630 22V480M665 130V480M640 60L900 75M705 75L920 80M870 22L860 70M560 440H740M820 340L810 493M395 60L385 230"],
  ["b", "major", "M0 305L90 230L380 215L630 208L820 210Q870 210 920 260L1000 330L1070 385Q1105 420 1100 493M45 30L70 120L105 180L110 290L145 340L155 493M155 380Q200 350 260 350L520 342L730 335L830 340L890 390M385 22V190L390 420L405 493M0 45L40 28M1050 22Q1110 60 1130 110L1190 150L1250 270L1290 340L1320 440L1370 493M520 330L522 470M440 490L520 465H730"],
  ["b", "hw", "M425 22Q440 90 490 150Q530 220 532 280L525 370M915 22L895 120L820 270L800 310M880 450L940 380L1010 310L1120 190L1250 22M265 22L300 60"],
  ["b", "rail", "M1200 80V493M1110 30L1150 90L1200 130M1385 265Q1280 290 1250 250Q1215 180 1260 120Q1310 80 1385 110"],
  ["b", "teal", "M0 110L60 140L110 140L180 130L195 260L225 360L237 493"],
  ["b", "cyan", "M77 493L75 380L38 330L50 300H115L135 290L600 285L820 282L880 310L935 380L925 410L950 450L955 493M435 490L490 472L800 470L810 493"],
  ["b", "purple", "M315 125L740 105L820 125L860 160L930 155L1010 120L1075 112L1110 70L1112 22M716 22L720 300L730 493"],
  ["b", "green", "M587 22L590 200L602 400L598 493M40 22L50 100L90 150"],
  ["b", "gold", "M300 50V180L320 290L350 390L385 493M795 330L800 493"],
  ["b", "rose", "M982 22V160L1095 265L1100 350L1070 390L1080 420L1015 493"],
  ["a", "red", "M958 168L1042 173L1125 257L1190 250L1205 240L1228 243L1264 220L1310 257H1335L1380 285L1400 300"],
  ["a", "teal", "M1302 40V75L1330 108L1380 122"],
  ["c", "river", "M330 35L430 45L510 95L545 145L550 200L532 280L545 380L553 493M1222 22L1218 70L1243 130L1235 180L1190 260L1150 330L1145 390L1180 440L1250 445L1275 493"],
  ["c", "white", "M0 290L20 320L60 325L170 315M50 325V385M0 362H50M0 395L190 397L230 410M170 205L230 190M175 285L300 270L380 250L450 205L520 208L580 220L750 225L850 218L1100 205L1220 190L1300 185M940 215V400L965 493M1140 22L1135 150L1100 180V440L1085 493M1190 22L1230 60L1190 160L1150 260L1130 330L1140 400L1190 460M1300 40L1265 70L1275 130L1240 230L1250 340L1275 440L1300 480M1250 322H1300M530 493L535 460L570 445L820 440L860 450M765 445V493M565 450L575 493"],
  ["c", "minor", "M120 22L160 220L190 370L192 400M195 120L270 110L340 100L368 130L375 210L410 290L400 330L440 380L465 410V493M580 22L605 90L625 280L635 400L650 420M735 22L720 150L728 240L680 380L630 450L615 493M860 450L920 460L955 445L965 493M1050 493H1110"],
  ["c", "rail", "M770 22L795 70L780 190L745 290L660 430L620 493M0 100Q55 130 55 190Q45 240 0 258"],
  ["c", "hw", "M330 22L290 110L235 180L230 270L240 400L248 493M715 22Q770 90 840 150Q905 190 900 240L875 350L865 440M840 150L960 130L1040 90Q1120 65 1170 80Q1200 100 1300 98"],
];

const LOW: [string, Style, string][] = [
  ["a", "park", "M620 495H700L660 512ZM1090 495H1180L1200 550L1240 640L1300 720L1345 770L1300 820L1270 850L1245 820L1255 760L1210 680L1200 560ZM1005 795L1020 760L1065 775L1040 800L1020 840H1005ZM840 755H858L850 780ZM1040 668L1090 690L1085 712L1060 700ZM585 910L605 900V925Z"],
  ["b", "park", "M350 495H400V528H370ZM485 850Q500 830 565 828L560 900L530 895L490 870ZM1180 540L1215 495H1250L1320 560L1330 600L1250 575ZM840 700L885 735L875 745L830 715ZM85 980H125V1010H85Z"],
  ["c", "park", "M0 495L25 515L0 515Z"],
  ["a", "lake", "M1215 640L1260 720L1225 725ZM1140 495L1210 580L1220 610L1190 570Z"],
  ["b", "lake", "M45 945H65V970H45ZM320 560L370 640L350 630Z"],
  ["a", "rail", "M576 790L640 760L720 710L790 685L870 645L960 660L1040 610L1100 640L1150 770M710 720L680 830L750 930L790 990M1380 600L1300 720L1180 800L1100 880L1060 1010M1180 850L1150 1010M1330 560L1200 850L1330 1010M576 710L700 720"],
  ["b", "rail", "M0 690L140 600L220 590L215 495M0 590L60 680L90 850L120 1010M100 940L200 720L370 660L300 740M370 660L720 670L880 720L1050 900M1170 495L1200 600L1160 720M980 495L940 600L900 780M20 600L160 640M350 600L360 770"],
  ["a", "white", "M620 830L630 760L740 720L800 790L880 830M576 940L660 900L720 990M740 880L830 840L850 980M990 880L1060 930L1100 870M1000 950L1100 1000M1060 495L1100 580L1160 590M1100 650L1380 640M576 600L700 610L900 520"],
  ["b", "white", "M0 600L200 620L520 600M0 830L90 840L400 820L600 860L700 950M160 640L150 850L240 1000M60 660V1000M250 700L500 720M430 870L700 900L1000 860M0 750L170 790L480 760M580 495L600 650L660 760M1000 560L900 780L920 940M1140 620L1380 670M600 840L770 690L880 770L1000 690M700 700L950 860M50 920L200 880M1080 520L1040 700L1180 820L1160 1010"],
  ["c", "white", "M20 520L90 560L110 650L140 700L150 740M105 750V885H160V740M30 920L190 880M40 910L80 1010"],
  ["a", "minor", "M576 570L620 545L680 550L720 510L830 515L960 495M576 715L690 712L780 740L850 750L890 790L900 850M576 820L740 820L800 940L860 990M950 870L1200 900L1300 890M1050 780L1060 830L1100 870L1090 930L1030 1010M1160 520L1200 540L1300 640M990 920L1070 780L1200 775"],
  ["b", "minor", "M0 520L200 545L580 540M30 910L300 905L560 880L720 895L840 870M520 780L560 810L680 900M750 670L820 780L900 860M730 740V920L960 920M600 570L730 600L920 590L1100 600M940 980L1000 960L1110 930L1130 760L1150 600M1150 730L1290 690L1360 740L1385 810M1120 890L1220 880M690 860L800 800M745 920V1000H860M1385 600L1150 600M1130 880L1080 890"],
  ["c", "minor", "M0 595L160 592L192 545M0 770L40 850L0 870M0 725L70 735L190 733M160 735V770M10 890L75 900L140 910L192 970M10 890L30 1010"],
  ["a", "major", "M1185 550L1250 600L1290 700L1340 780L1365 860L1345 885M1345 885L1300 890L1200 905L1140 900L1090 870"],
  ["b", "major", "M0 790L20 880L130 840L270 860L310 920L420 900L440 870M75 495L120 540L150 590L180 615L320 590L480 570L560 570M40 495L60 670L220 680L410 675L540 660L575 620L585 540M410 495L415 690L430 740L440 810L520 815L600 740L690 670L750 630L745 560L740 495M290 720L120 615"],
  ["a", "hw", "M1050 495L1000 590L965 660L970 830L930 880L920 1010M735 1010Q740 950 800 915L920 885Q960 840 970 820M950 1010L1060 890L1200 800L1210 700L1250 620L1380 550L1430 520"],
  ["b", "hw", "M460 1010L440 920L430 830M210 580L215 700L205 860L210 1010M320 900L315 1010M500 560L600 690L700 790L790 940L870 1010M560 540L800 548L890 560L1000 630L1200 670L1380 750M740 630L840 690L960 790L1050 890L1140 1000M1150 540L1120 620L960 780L920 880L840 930L660 970L590 1010"],
  ["c", "hw", "M0 740Q80 790 192 768M115 1010L192 940"],
  ["b", "river", "M520 740L560 830L630 860L700 910L860 870L970 850L1000 790L1060 720L1130 650L1200 650L1280 720L1385 730"],
  ["c", "river", "M25 500L120 515L160 580L192 605M0 660L35 690L20 720L0 735M0 780L25 820L75 830L70 880L90 900L175 905L190 880"],
  ["b", "teal", "M288 495L280 600L265 760L200 770L168 800L178 1010"],
  ["b", "cyan", "M105 495L105 620L120 630H480L500 600L518 495"],
  ["b", "green", "M352 495L360 765H400L420 840L480 900M95 530L85 660L100 740"],
  ["b", "pink", "M410 495L415 630H430V670H505L515 770L610 755L700 880L800 815L885 740"],
  ["b", "blue", "M240 760L245 880L260 1010M215 600L213 700"],
  ["a", "rose", "M1215 810L1228 905L1155 910L1138 1010M1210 800L1380 780"],
];

function weight(style: Style, low: boolean) {
  const [c, w] = STROKES[style];
  return { stroke: c, strokeWidth: low ? Math.max(3, w * 0.62) : w };
}

function Layer({ shapes, low = false }: { shapes: [string, Style, string][]; low?: boolean }) {
  return (
    <g strokeLinejoin="round" fill="none">
      {shapes.map(([sheet, style, d], i) => {
        const [ox, oy] = SHEETS[sheet];
        const at = `translate(${ox} ${oy}) scale(.33333)`;
        if (style === "park") return <path key={i} transform={at} d={d} fill="#b2e8c9" />;
        if (style === "lake") return <path key={i} transform={at} d={d} fill="#a3d6fb" />;
        if (style === "rail")
          return (
            <g key={i} transform={at}>
              <path d={d} stroke="#bdbdbd" strokeWidth={low ? 4 : 6} />
              <path d={d} stroke="#fff" strokeWidth={low ? 2 : 3} strokeDasharray="18 18" />
            </g>
          );
        const s = weight(style, low);
        const edge = style === "hw" ? "#f3a04f" : style === "major" ? "#f6c75d" : style === "white" ? "#dddcda" : style === "minor" ? "#f8d596" : null;
        return (
          <g key={i} transform={at}>
            {edge && <path d={d} stroke={edge} strokeWidth={s.strokeWidth + (low ? 1 : 3)} />}
            <path d={d} {...s} />
          </g>
        );
      })}
    </g>
  );
}

const G = "#3d9440";
const D = "#333";
const M = "#9a9a9a";

/* sheet, left, middle, text, colour, size */
const LABELS: [string, number, number, string, string, number][] = [
  ["a", 810, 22, "三柱香", D, 10],
  ["a", 176, 168, "金鼎妙峰度假村", G, 12],
  ["a", 84, 286, "妙峰山镇", M, 12],
  ["a", 424, 272, "京浪岛文化", G, 12],
  ["a", 424, 311, "体育公园", G, 12],
  ["a", 182, 350, "京西古道", G, 12],
  ["a", 554, 374, "北京工业职业", D, 12],
  ["a", 554, 413, "技术学院", D, 12],
  ["a", 686, 177, "克勒峪", D, 12],
  ["a", 770, 112, "北京植物园", G, 12],
  ["a", 806, 240, "香山公园", G, 12],
  ["a", 862, 361, "北京西山国", G, 12],
  ["a", 862, 400, "家森林公园", G, 12],
  ["a", 1260, 182, "颐和园", G, 12],
  ["b", 74, 129, "圆明园", G, 12],
  ["b", 278, 98, "清华大学", D, 12],
  ["b", 622, 149, "北京奥林", G, 12],
  ["b", 622, 189, "匹克公园", G, 12],
  ["b", 610, 16, "森林公园", G, 12],
  ["b", 848, 18, "来广营桥", D, 12],
  ["b", 830, 141, "北小河公园", G, 12],
  ["b", 1100, 129, "五元桥", D, 12],
  ["b", 802, 210, "望和桥", D, 12],
  ["b", 338, 344, "蓟门桥", D, 12],
  ["b", 474, 338, "马甸桥", D, 12],
  ["b", 724, 330, "太阳宫桥", D, 12],
  ["b", 936, 318, "四元桥", D, 12],
  ["b", 862, 412, "三元桥", D, 12],
  ["b", 710, 469, "东直门北桥", D, 12],
  ["b", 36, 399, "海淀区", M, 15],
  ["b", 1146, 366, "将府公园", G, 12],
  ["b", 1092, 502, "朝阳公园", G, 12],
  ["c", 74, 71, "北京金港", D, 12],
  ["c", 54, 109, "国际赛车场", D, 12],
  ["c", 573, 208, "东郊森林公园", G, 12],
  ["c", 590, 247, "华北树木园", G, 12],
  ["c", 398, 357, "蓝调薰衣草庄园", G, 12],
  ["c", 84, 484, "东坝郊野公园", G, 12],
  ["c", 846, 447, "东", D, 13],
  ["c", 846, 490, "六", D, 13],
  ["c", 1134, 122, "燕京理工学院", D, 12],
  ["c", 1234, 202, "燕郊公园", G, 12],
  ["c", 1028, 323, "中国宋庄", M, 12],
  ["c", 1282, 467, "华北", D, 12],
];

const LOW_LABELS: [string, number, number, string, string][] = [
  ["a", 602, 517, "天门山森林公园", G],
  ["a", 656, 587, "石厝四沟", D],
  ["a", 610, 617, "潭人洞", M],
  ["a", 576, 648, "将军坨风景区", G],
  ["a", 808, 573, "千灵山", G],
  ["a", 790, 618, "金字山", D],
  ["a", 980, 546, "北宫国家", G],
  ["a", 980, 567, "森林公园", G],
  ["a", 1172, 522, "北京国际园", G],
  ["a", 1184, 558, "园博园桥", D],
  ["a", 1174, 640, "杜家坎桥", D],
  ["a", 1246, 610, "卢沟桥", G],
  ["a", 1088, 695, "云岗森林公园", G],
  ["a", 1314, 695, "世纪森林公园", G],
  ["a", 1160, 757, "房车露营公园", G],
  ["a", 974, 790, "南宫体育会所", D],
  ["a", 920, 704, "云居", M],
  ["a", 604, 730, "煤岭", M],
  ["a", 826, 745, "良乙路", D],
  ["a", 842, 817, "青龙湖公园", G],
  ["a", 832, 847, "青龙湖镇", M],
  ["a", 576, 785, "青山世界", G],
  ["a", 576, 806, "公园", G],
  ["a", 868, 888, "良坨路桥", D],
  ["a", 1056, 866, "京良桥", D],
  ["a", 1268, 866, "北京农业", D],
  ["a", 1268, 887, "职业学院", D],
  ["a", 998, 958, "房山区", M],
  ["a", 864, 1008, "莲花池东桥", D],
  ["a", 1122, 1004, "北京理工大学", D],
  ["b", 0, 522, "岳各庄桥", D],
  ["b", 24, 580, "丰台区", M],
  ["b", 98, 551, "丽泽桥", D],
  ["b", 184, 549, "菜户营桥", D],
  ["b", 315, 558, "北京南站", "#3c6fd0"],
  ["b", 318, 585, "木樨园桥", D],
  ["b", 422, 541, "左安门桥", D],
  ["b", 462, 568, "分钟寺桥", D],
  ["b", 560, 538, "四方桥", D],
  ["b", 676, 537, "古塔公园", G],
  ["b", 180, 612, "玉泉营桥", D],
  ["b", 516, 636, "十八里店桥", D],
  ["b", 646, 657, "海棠公园", G],
  ["b", 704, 624, "化工桥", D],
  ["b", 388, 671, "榴乡桥", D],
  ["b", 594, 712, "大羊坊桥", D],
  ["b", 806, 691, "东石村桥", D],
  ["b", 782, 744, "东石公园", G],
  ["b", 914, 590, "营各二桥", D],
  ["b", 1066, 650, "施园桥", D],
  ["b", 1118, 509, "城市绿心", G],
  ["b", 1118, 530, "森林公园", G],
  ["b", 1268, 509, "通州大运河", G],
  ["b", 1268, 530, "森林公园", G],
  ["b", 1114, 552, "土桥新桥", D],
  ["b", 1288, 612, "密阳工业园", D],
  ["b", 1338, 633, "区", D],
  ["b", 1020, 695, "台湖公园", G],
  ["b", 1290, 724, "瞳辛庄桥", D],
  ["b", 174, 753, "新发地桥", D],
  ["b", 526, 763, "亦庄桥", D],
  ["b", 44, 856, "狼垡东桥", D],
  ["b", 158, 855, "西红门南桥", D],
  ["b", 398, 827, "旧宫新桥", D],
  ["b", 550, 871, "南海子公园", G],
  ["b", 322, 908, "志远西桥", D],
  ["b", 764, 946, "马驹桥桥", D],
  ["b", 930, 794, "徐庄桥", D],
  ["b", 894, 849, "垡园村", M],
  ["b", 1174, 799, "垡头村", M],
  ["b", 1220, 887, "漷马路", D],
  ["b", 1012, 919, "马驹桥湿地", G],
  ["b", 1012, 940, "公园(2期)", G],
  ["c", 128, 782, "齐智镇", M],
];

const PINS: [string, number, number, "tree" | "school" | "gate"][] = [
  ["a", 146, 160, "tree"], ["a", 654, 172, "tree"], ["a", 984, 108, "tree"], ["a", 876, 183, "tree"], ["a", 948, 303, "tree"],
  ["a", 392, 285, "tree"], ["a", 150, 346, "tree"], ["a", 522, 388, "school"], ["a", 1310, 127, "gate"],
  ["b", 123, 73, "gate"], ["b", 246, 93, "school"], ["b", 591, 166, "tree"], ["b", 915, 85, "tree"], ["b", 1215, 310, "tree"], ["b", 1058, 498, "tree"],
  ["c", 678, 151, "tree"], ["c", 366, 352, "tree"], ["c", 186, 430, "tree"], ["c", 144, 14, "school"],
];

const LOW_PINS: [string, number, number, string][] = [
  ["a", 690, 557, ""], ["a", 880, 571, ""], ["a", 770, 615, ""], ["a", 964, 553, ""], ["a", 1154, 519, ""], ["a", 1231, 607, ""], ["a", 1071, 691, ""], ["a", 1296, 693, ""],
  ["a", 1213, 728, ""], ["a", 1027, 763, "s"], ["a", 886, 788, ""], ["a", 614, 878, ""], ["a", 1252, 873, "s"], ["a", 1105, 1006, "s"], ["a", 662, 492, ""],
  ["b", 298, 556, "m"], ["b", 709, 509, ""], ["b", 628, 654, ""], ["b", 816, 714, ""], ["b", 1003, 691, ""], ["b", 1207, 518, ""], ["b", 1252, 518, ""], ["b", 1340, 583, "s"],
  ["b", 534, 867, ""], ["b", 995, 927, ""], ["b", 101, 994, ""], ["b", 275, 492, ""],
];

const SHIELDS: [string, number, number, string, string][] = [
  ["a", 840, 511, "#e4585a", "G109"], ["a", 600, 560, "#e4585a", "G108"], ["a", 1208, 795, "#e4585a", "G107"], ["b", 482, 914, "#e4585a", "G104"], ["c", 121, 741, "#e4585a", "G103"], ["c", 58, 874, "#e4585a", "G103"],
  ["a", 800, 741, "#f5a83c", "S328"], ["a", 733, 822, "#f5a83c", "S328"], ["a", 814, 1006, "#f5a83c", "S224"], ["b", 873, 650, "#f5a83c", "S306"], ["b", 953, 769, "#f5a83c", "S221"], ["b", 1146, 739, "#f5a83c", "S221"], ["b", 1196, 888, "#f5a83c", "S326"], ["b", 920, 984, "#f5a83c", "S221"], ["c", 28, 982, "#f5a83c", "S202"],
  ["a", 958, 834, "#35964f", "G4501"], ["a", 802, 912, "#35964f", "G5"], ["a", 1172, 814, "#35964f", "G4"], ["a", 722, 1006, "#35964f", "G5"], ["b", 791, 548, "#35964f", "G1"], ["b", 1207, 674, "#35964f", "G1"], ["b", 414, 870, "#35964f", "S30"], ["b", 324, 971, "#35964f", "G4501"], ["b", 866, 1004, "#35964f", "G2"], ["b", 1152, 1002, "#35964f", "G45"],
  ["a", 740, 774, "#ffffff", "X033"], ["a", 768, 794, "#ffffff", "X002"], ["a", 806, 815, "#ffffff", "X001"], ["a", 727, 921, "#ffffff", "X026"], ["a", 890, 960, "#ffffff", "X006"], ["b", 726, 695, "#ffffff", "X007"], ["b", 758, 717, "#ffffff", "X005"], ["b", 938, 680, "#ffffff", "X011"], ["b", 1012, 889, "#ffffff", "X007"], ["c", 102, 834, "#ffffff", "X005"],
];

function MapText({ sheet, x, y, text, color, size }: { sheet: string; x: number; y: number; text: string; color: string; size: number }) {
  const [ox, oy] = SHEETS[sheet];
  return (
    <text x={Math.round(ox + x / 3)} y={Math.round(oy + y / 3 + size * 0.37)} fontSize={size} fill={color} stroke="#fff" strokeWidth={size > 8 ? 2 : 1} strokeLinejoin="round" paintOrder="stroke">
      {text}
    </text>
  );
}

function MapCanvas() {
  return (
    <svg className="absolute inset-0 h-full w-full font-['Noto_Sans_CJK_SC',sans-serif]" aria-label="地图">
      <defs>
        <clipPath id="upper">
          <rect width="100%" height="157" />
        </clipPath>
        <clipPath id="lower">
          <rect x="185" y="157" width="773" height="172" />
        </clipPath>
      </defs>
      <g clipPath="url(#lower)">
        <rect x="185" y="157" width="773" height="172" fill="#f4f3ef" />
        <g opacity=".85">
          <Layer shapes={LOW} low />
        </g>
        {LOW_PINS.map(([s, x, y, k], i) => {
          const cx = SHEETS[s][0] + x / 3;
          const cy = SHEETS[s][1] + y / 3;
          const c = k === "s" ? "#4ab3d3" : k === "m" ? "#4f86e0" : "#5cba5c";
          return (
            <g key={i}>
              <path d={`M${cx - 4} ${cy + 3}h8l-4 4z`} fill={c} />
              <circle cx={cx} cy={cy} r="4.500" fill={c} />
              <path d={`M${cx - 2} ${cy + 1}l2-4 2 4z`} fill="#fff" />
            </g>
          );
        })}
        {SHIELDS.map(([s, x, y, c, t], i) => {
          const cx = SHEETS[s][0] + x / 3;
          const cy = SHEETS[s][1] + y / 3;
          const w = t.length * 2.5 + 5;
          return (
            <g key={i}>
              <rect x={cx - w / 2} y={cy - 3.5} width={w} height="7" rx="1" fill={c} />
              <text x={cx} y={cy + 2} fontSize="5" textAnchor="middle" fill={c === "#ffffff" ? "#888" : "#fff"}>
                {t}
              </text>
            </g>
          );
        })}
        <g opacity=".85">
          {LOW_LABELS.map(([s, x, y, t, c], i) => (
            <MapText key={i} sheet={s} x={x} y={y} text={t} color={c} size={c === M && t.endsWith("区") ? 7 : 6} />
          ))}
          <text x="771" y="181" fontSize="7" fill={D} transform="rotate(-50 771 181)">京沈路</text>
          <text x="795" y="162" fontSize="7" fill={D} transform="rotate(42 795 162)">京塘路</text>
          <text x="813" y="304" fontSize="7" fill={D} transform="rotate(65 813 304)">京津路</text>
        </g>
      </g>
      <g clipPath="url(#upper)">
        <rect width="100%" height="157" fill="#f3f2ee" />
        <Layer shapes={TOP} />
        {PINS.map(([s, x, y, k], i) => {
          const c = k === "school" ? "#4db4d2" : "#5fbd58";
          const e = k === "school" ? "#3ca3c4" : "#46a544";
          return (
            <g key={i} transform={`translate(${SHEETS[s][0] + x / 3} ${SHEETS[s][1] + y / 3})`}>
              <path d="M-5 7h10l-5 5z" fill={e} />
              <circle r="8.500" fill={c} stroke={e} />
              {k === "tree" && (
                <g fill="#fff">
                  <ellipse cx="-1.500" cy="-1.500" rx="2" ry="3.500" />
                  <ellipse cx="2.500" cy="0" rx="1.500" ry="2.500" />
                  <path d="M-2 1h1v2.500h3V2h1v1.500h1.500v1H-4v-1h2z" />
                </g>
              )}
              {k === "school" && <path d="M0-5l6.500 3L0 1l-6.500-3zM-4 0l4 2 4-2v3L0 5l-4-2z" fill="#fff" />}
              {k === "gate" && <path d="M-4-4.500h8l1.500 2.500H-5.500zM-4-1h8v1.500H-4zM-3.500.5h2v3.500h-2zM1.500.5h2v3.500h-2z" fill="#fff" />}
            </g>
          );
        })}
        <rect x="1178" y="32" width="33" height="12" rx="1" fill="#fff" />
        <rect x="1179" y="32" width="32" height="11" rx="1" fill="#279a4c" />
        <path d="M1179 33h32" stroke="#e24444" strokeWidth="2" />
        <text x="1195" y="41" fontSize="7" fill="#fff" textAnchor="middle">G0121</text>
        <rect x="958" y="87" width="24" height="13" rx="1" fill="#279a4c" />
        <path d="M959 89h22" stroke="#f3c044" strokeWidth="1" />
        <text x="970" y="97" fontSize="7" fill="#fff" textAnchor="middle">S51</text>
        {LABELS.map(([s, x, y, t, c, z], i) => (
          <MapText key={i} sheet={s} x={x} y={y} text={t} color={c} size={z} />
        ))}
      </g>
    </svg>
  );
}

function BaiduLogo() {
  return (
    <svg className="absolute bottom-[21px] left-[2px]" width="76" height="30" viewBox="0 0 76 30" role="img" aria-label="百度地图">
      <g stroke="#b5b5b5" strokeWidth="7" strokeLinejoin="round" fill="#b5b5b5">
        <path d="M5 15h67v9H5z" />
        <path d="M30 7l4-3 8 2 4 6-2 12H30l-2-12z" />
      </g>
      <g stroke="#fff" strokeWidth="5" strokeLinejoin="round" fill="#fff">
        <path d="M5 15h67v9H5z" />
        <path d="M30 7l4-3 8 2 4 6-2 12H30l-2-12z" />
      </g>
      <text x="3" y="25" fontSize="15" fontWeight="700" fill="#e10601" fontFamily="Liberation Sans">Bai</text>
      <g fill="#2319dc">
        <ellipse cx="30" cy="12" rx="2.500" ry="3.500" />
        <ellipse cx="35" cy="6.500" rx="2.700" ry="3.700" />
        <ellipse cx="41" cy="7" rx="2.700" ry="3.700" />
        <ellipse cx="46" cy="13" rx="2.500" ry="3.500" />
        <path d="M38 12c3 0 4 3 6 5 2.500 2.500 2 8-1.500 8.500-3 .5-6-.5-9 0-4 .5-5.500-4-3.500-7 1.500-2.500 5-6.500 8-6.500z" />
      </g>
      <text x="38" y="24" fontSize="9" fontWeight="700" fill="#fff" fontFamily="Liberation Sans" textAnchor="middle">du</text>
      <text x="49" y="24" fontSize="12" fontWeight="700" fill="#e10601" fontFamily="Noto Sans CJK SC">地</text>
      <rect x="61" y="13.500" width="12" height="12" fill="#e10601" />
      <text x="62" y="23.500" fontSize="10" fontWeight="500" fill="#fff" fontFamily="Noto Sans CJK SC">图</text>
    </svg>
  );
}

const PAN: [string, string, string][] = [
  ["向上平移", "left-[13px] top-[2px]", "M1.500 7L6 3l4.500 4"],
  ["向下平移", "left-[13px] bottom-[2px]", "M1.500 4L6 8l4.500-4"],
  ["向左平移", "left-[1px] top-[13px]", "M8 1.500L3.500 6 8 10.500"],
  ["向右平移", "right-[1px] top-[13px]", "M4 1.500L8.500 6 4 10.500"],
];

const BOX = "flex h-[17px] w-[18px] items-center justify-center rounded-[2px] border border-[#8f8f8f] bg-white shadow-[1px_1px_2px_rgba(0,0,0,0.4)]";

function MapControls() {
  return (
    <div className="absolute left-[12px] top-[10px] flex w-10 flex-col items-center">
      <div className="relative h-10 w-10 rounded-full border border-[#999] bg-[#fdfdfd] shadow-[0_1px_3px_rgba(0,0,0,0.5)]">
        {PAN.map(([name, place, d]) => (
          <button key={name} type="button" aria-label={name} className={"absolute " + place}>
            <svg width="12" height="12" viewBox="0 0 12 12" fill="none" stroke="#4070dc" strokeWidth="2">
              <path d={d} />
            </svg>
          </button>
        ))}
      </div>
      <button type="button" aria-label="放大一级" className={BOX + " mt-[6px]"}>
        <svg width="9" height="9" viewBox="0 0 9 9" stroke="#4b7fe6" strokeWidth="2"><path d="M4.500 1v7M1 4.500h7" /></svg>
      </button>
      <div className="relative flex h-[103px] w-[18px] justify-center">
        <input type="range" aria-label="缩放级别" className="sr-only" />
        <svg width="6" height="103" viewBox="0 0 6 103">
          <rect x=".5" y="0" width="5" height="103" fill="#e9e9e9" stroke="#999" />
          <rect x="1" y="50" width="4" height="53" fill="#93b4f8" />
          <path d="M3 3v100" stroke="#fff" strokeOpacity=".5" strokeWidth="4" strokeDasharray="1 5" />
        </svg>
        <span className="absolute left-0 top-[43px] flex h-[10px] w-[18px] items-center justify-center rounded-[2px] border border-[#8f8f8f] bg-white">
          <span className="h-[2px] w-[10px] bg-[#4b7fe6]" />
        </span>
      </div>
      <button type="button" aria-label="缩小一级" className={BOX}>
        <span className="h-[2px] w-2 bg-[#4b7fe6]" />
      </button>
    </div>
  );
}

/* ---------- form ---------- */

const LABEL = "mb-[7px] block text-[13px] font-bold leading-4 text-[#5c5c5c]";
const INPUT = "block w-full border border-[#e2e2e4] bg-white px-3 text-sm text-[#555] outline-none placeholder:text-[#aaa]";
const HELP = "mt-[5px] text-xs leading-[17px] text-[#a0a0a0]";

function TextField({ id, label, hint, help }: { id: string; label: string; hint: string; help?: string }) {
  return (
    <div>
      <label htmlFor={id} className={LABEL}>{label}</label>
      <input id={id} type="text" placeholder={hint} className={INPUT + " h-[34px]"} />
      {help && <p className={HELP}>{help}</p>}
    </div>
  );
}

function StatusOption({ label, checked }: { label: string; checked?: boolean }) {
  return (
    <label className="flex items-center gap-[6px] text-xs leading-4 text-[#666]">
      <input
        type="radio"
        name="status"
        defaultChecked={checked}
        className="h-4 w-4 appearance-none rounded-full border border-[#ddd] bg-white checked:bg-[radial-gradient(circle,#2099cc_5px,transparent_6px)]"
      />
      {label}
    </label>
  );
}

export default function App() {
  return (
    <div className={"min-h-screen bg-[#efefef] pb-[5px] text-[#666] " + FONT}>
      <nav className="flex h-[38px] items-center bg-[#f9f9f9] pl-5 text-xs text-[#2a93c7] shadow-[inset_0_3px_3px_-2px_rgba(0,0,0,0.05)]">
        <svg width="9" height="12" viewBox="0 0 9 12" className="mr-2" aria-hidden="true">
          <path fillRule="evenodd" d="M4.500 0C7 0 8 1.800 8 3.700 8 5.500 5.800 9 5.200 11.300H3.800C3.200 9 1 5.500 1 3.700 1 1.800 2 0 4.500 0zm0 2a1.800 1.800 0 1 0 0 3.600 1.800 1.800 0 0 0 0-3.600z" fill="#999" />
        </svg>
        {["活动", "培训课程", "培训机构", "新增"].map((t) => (
          <span key={t} className="mr-[10px] flex items-center">
            <svg width="9" height="8" viewBox="0 0 9 8" className="mr-[5px]" fill="none" stroke="#999" strokeWidth="1.200" aria-hidden="true">
              <path d="M3 1l3 3-3 3" />
            </svg>
            <a href="#">{t}</a>
          </span>
        ))}
      </nav>

      <main className="ml-[11px] mr-px mt-5 bg-white">
        <header className="flex h-12 items-center justify-between bg-[#f9f9f9] pb-[2px] pl-5 pr-6">
          <h1 className="text-[15px] font-bold text-[#5f5f5f]">新增</h1>
          <div className="flex items-center gap-[13px]">
            <button type="button" aria-label="刷新">
              <svg width="15" height="15" viewBox="0 0 15 15" fill="none" stroke="#c2c2c2" strokeWidth="1.500">
                <path d="M6 1.800A6 6 0 0 0 5.500 12.800M9 13.200A6 6 0 0 0 9.500 2.200" />
                <path d="M4 11l3 2-3 2zM11 0L8 2l3 2z" fill="#c2c2c2" stroke="none" />
              </svg>
            </button>
            <button type="button" aria-label="全屏显示">
              <svg width="16" height="15" viewBox="0 0 16 15" fill="none" stroke="#bcbcbc" strokeWidth="1.400">
                <path d="M1 5V1h4M1 1l5 4.500M11 1h4v4M15 1l-5 4.500M1 10v4h4M1 14l5-4.500M11 14h4v-4M15 14l-5-4.500" />
              </svg>
            </button>
          </div>
        </header>

        <form className="flex flex-col gap-5 px-[35px] py-5" onSubmit={(e) => e.preventDefault()}>
          <TextField id="name" label="名称" hint="请输入名称" />
          <TextField id="contact" label="联系人" hint="请输入联系人" />
          <TextField id="phone" label="联系方式" hint="请输入联系方式" />
          <div>
            <span className={LABEL}>机构LOGO</span>
            <button type="button" className="mb-[10px] block h-10 rounded-[3px] bg-[#00b7ee] px-[15px] text-sm text-white">上传单张图片</button>
            <p className="text-xs leading-[17px] text-[#a0a0a0]">图片尺寸320*180像素</p>
          </div>
          <div>
            <label htmlFor="branch" className={LABEL}>分校名称</label>
            <textarea id="branch" placeholder="请输入分校名称" className={INPUT + " h-[154px] resize-y py-[6px] leading-5"} />
            <p className={HELP}>每行一个，没有分校可以不用填写</p>
          </div>
          <TextField id="video" label="机构视频" hint="请输入机构视频" help="上传到腾讯视频，并复制分享里面的通用代码粘贴到此处" />

          <div>
            <span className={LABEL}>介绍</span>
            <div className="rounded border border-[#d4d4d4] bg-white">
              <div className="relative overflow-hidden rounded-t border-b border-[#d4d4d4] bg-gradient-to-b from-white to-[#f2f2f2] py-[3px] pl-1 shadow-[0_1px_4px_rgba(0,0,0,0.25)]">
                <ToolRow spec={ROW1} />
                <ToolRow spec={ROW2} />
                <div className="absolute right-[2px] top-[3px]">
                  <Tool id="全屏" />
                </div>
              </div>
              <div contentEditable suppressContentEditableWarning role="textbox" aria-label="介绍" className="h-[366px] outline-none" />
              <div className="flex h-[23px] items-center justify-between border-t border-[#ccc] pl-[2px] text-xs">
                <span>元素路径:</span>
                <span className="text-[#aaa]">字数统计</span>
              </div>
            </div>
          </div>

          <div>
            <TextField id="address" label="地图标注" hint="请输入要搜索的地址" />
            <div className="relative mt-[10px] h-[500px] overflow-hidden border border-[#ccc] bg-[#f2f1eb]">
              <MapCanvas />
              <div className="absolute left-[82px] top-[19px] w-[109px] text-center font-['Liberation_Sans','Noto_Sans_CJK_SC',sans-serif] text-xs leading-4 text-black">
                5 公里
                <div className="-mt-px h-[6px] border-x border-b-[3px] border-black" />
              </div>
              <MapControls />
              <BaiduLogo />
              <p className="absolute bottom-[3px] left-[2px] whitespace-nowrap bg-white/70 px-px font-['Liberation_Sans','Noto_Sans_CJK_SC',sans-serif] text-xs leading-[15px] text-black">
                © 2020 Baidu - GS(2019)5218号 - 甲测资字1100930 - 京ICP证030173号 - Data © 长地万方
              </p>
            </div>
          </div>

          <fieldset>
            <legend className={LABEL}>状态</legend>
            <div className="mt-[9px] flex gap-[15px]">
              <StatusOption label="禁用" />
              <StatusOption label="启用" checked />
            </div>
          </fieldset>

          <div className="mt-[9px] flex gap-1">
            <button type="submit" className="h-[34px] w-[110px] border border-[#13829b] bg-[#2099cc] text-[13px] font-bold text-white">提交</button>
            <button type="button" className="h-[34px] w-[54px] border border-[#e7e7e7] bg-[#f5f5f5] text-[13px] font-bold text-[#555]">返回</button>
          </div>
        </form>
      </main>
    </div>
  );
}
